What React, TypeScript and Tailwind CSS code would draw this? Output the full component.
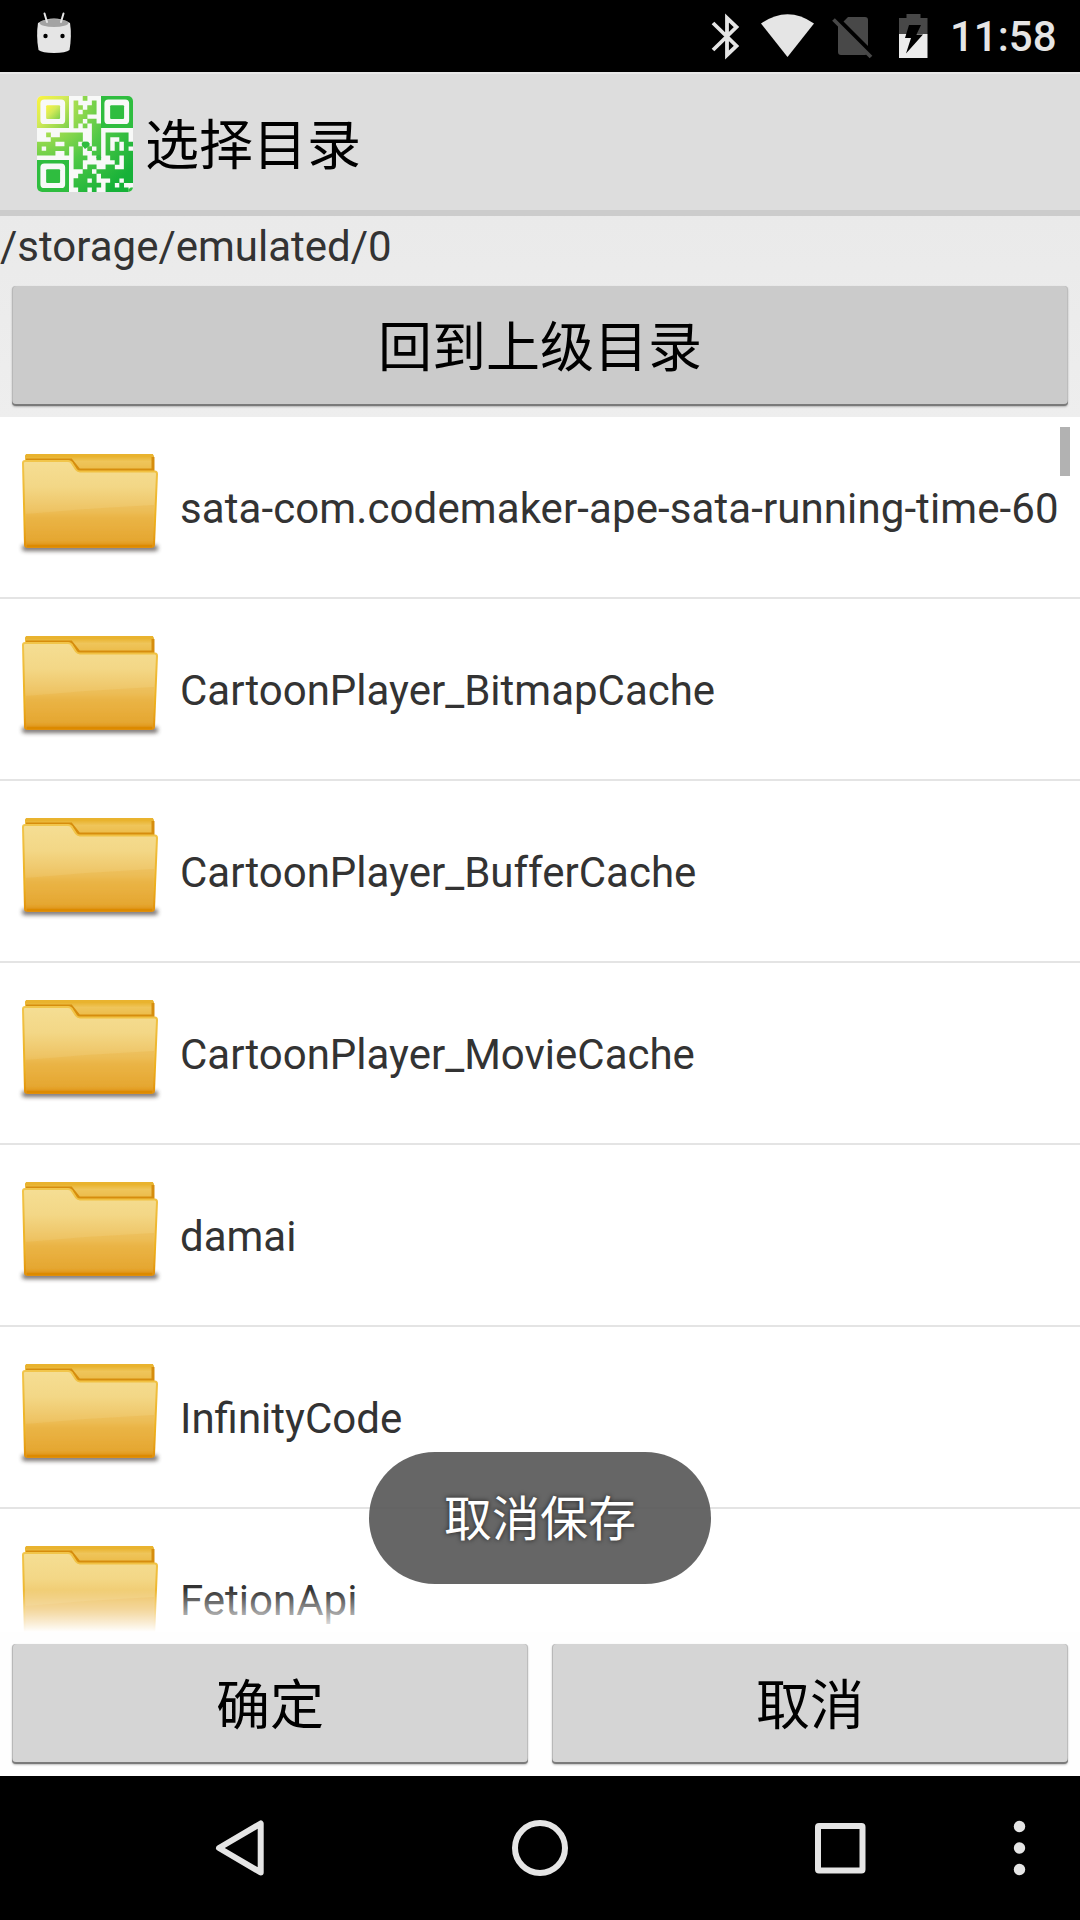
import React from "react";

const FOLDERS = [
  "sata-com.codemaker-ape-sata-running-time-60",
  "CartoonPlayer_BitmapCache",
  "CartoonPlayer_BufferCache",
  "CartoonPlayer_MovieCache",
  "damai",
  "InfinityCode",
  "FetionApi",
];

const QR = [
  "..........#..........",
  "........#...#........",
  "........##.##........",
  "........#.###........",
  "........###..........",
  "........##.##........",
  "........#.#.##.......",
  "............##.......",
  "..#..#####..##.#####.",
  "...#######..##.#..##.",
  "####..###.#.##.#.#.##",
  "#.#####.##.#.#.#.#.#.",
  "####..#.##..##.######",
  "........###..#..##.##",
  "........##.......#.##",
  "........##.##..##..##",
  "..........##.########",
  ".........####.#######",
  "........###.#...##.##",
  "........######.##.#..",
  ".........##.#..#####.",
];

function Finder({ x, y }: { x: number; y: number }) {
  return (
    <g transform={`translate(${x} ${y})`} fillRule="evenodd">
      <path d="M0 0H7V7H0ZM1.6 .75Q.75 .75 .75 1.6V5.3Q.75 6.15 1.6 6.15H5.3Q6.15 6.15 6.15 5.3V1.6Q6.15 .75 5.3 .75Z" />
      <rect x="2" y="2" width="3.05" height="3.05" rx=".25" />
    </g>
  );
}

function QrLogo() {
  return (
    <svg className="mt-1 h-24 w-24 rounded-[5px] bg-[#f8f9f8]" viewBox="0 0 21 21">
      <defs>
        <radialGradient id="qr" gradientUnits="userSpaceOnUse" cx="0" cy="0" r="26">
          <stop offset="0" stopColor="#fff84a" />
          <stop offset=".16" stopColor="#dcee58" />
          <stop offset=".38" stopColor="#93d94e" />
          <stop offset=".62" stopColor="#4fc846" />
          <stop offset="1" stopColor="#16b138" />
        </radialGradient>
        <linearGradient id="corner" x1="0" y1="0" x2="1" y2="1">
          <stop offset="0" stopColor="#fdf43f" />
          <stop offset=".45" stopColor="#d3ea58" />
          <stop offset="1" stopColor="#7bd04c" />
        </linearGradient>
      </defs>
      <path
        fill="url(#qr)"
        d={QR.map((row, y) =>
          [...row].map((c, x) => (c === "#" ? `M${x} ${y}h1.03v1.03h-1.03z` : "")).join("")
        ).join("")}
      />
      <g fill="url(#corner)"><Finder x={0} y={0} /></g>
      <g fill="#2fbd3f">
        <Finder x={14} y={0} />
        <Finder x={0} y={14} />
        <circle cx="13.5" cy="13.4" r=".5" />
        <path d="M10.5 11.6 9.8 10.8V10.2L10.2 10H11.2L11.5 10.4V10.9Z" />
        <path d="M20 21V20.4L20.5 20H21V21Z" />
      </g>
    </svg>
  );
}

function Folder() {
  return (
    <svg className="h-[180px] w-[180px] shrink-0" viewBox="0 0 180 180">
      <defs>
        <linearGradient id="front" x1="0" y1="0" x2="0" y2="1">
          <stop offset="0" stopColor="#f5de94" />
          <stop offset=".3" stopColor="#f3d786" />
          <stop offset=".58" stopColor="#eec363" />
          <stop offset=".66" stopColor="#ebb84d" />
          <stop offset=".92" stopColor="#e5a733" />
          <stop offset="1" stopColor="#de8e0c" />
        </linearGradient>
        <linearGradient id="edge" x1="0" y1="0" x2="0" y2="1">
          <stop offset="0" stopColor="#f1c54b" />
          <stop offset=".7" stopColor="#eeb01e" />
          <stop offset="1" stopColor="#e19009" />
        </linearGradient>
        <linearGradient id="back" x1="0" y1="0" x2="0" y2="1">
          <stop offset="0" stopColor="#e6aa18" />
          <stop offset=".3" stopColor="#efc55a" />
          <stop offset="1" stopColor="#e8b038" />
        </linearGradient>
        <filter id="soft" x="-10%" y="-200%" width="120%" height="500%">
          <feGaussianBlur stdDeviation="2.2" />
        </filter>
        <filter id="tiny" x="-5%" y="-5%" width="110%" height="110%">
          <feGaussianBlur stdDeviation=".7" />
        </filter>
      </defs>
      <rect x="22" y="128" width="136" height="6" rx="3" fill="#3d3530" opacity=".7" filter="url(#soft)" />
      <g filter="url(#tiny)">
        <path d="M25 50V39Q25 37 28 37H151Q154 37 154 40V62H25Z" fill="url(#back)" />
        <path d="M26 38H153" fill="none" stroke="#e9b32e" strokeWidth="2" />
        <path d="M26 43H71L79 53H153V40" fill="none" stroke="#d68d0e" strokeWidth="3" />
        <path
          d="M23 46Q23 44 25 44H68Q71 44 72.500 47L76 52.500Q77.500 54.500 80 54.500H155Q157 54.500 157 57L154 128Q154 130 151 130H28Q25 130 25 128Z"
          fill="url(#front)" stroke="url(#edge)" strokeWidth="2"
        />
        <path d="M26 97Q90 91 154 88L153 126H27Z" fill="#e8a92e" opacity=".22" />
        <path d="M27 129H152" stroke="#dc8a04" strokeWidth="2.400" />
      </g>
    </svg>
  );
}

function HoloButton({ label, tone }: { label: string; tone: string }) {
  return (
    <button
      className={`h-[120px] flex-1 rounded-[4px] pt-[6px] text-[54px] leading-none text-black shadow-[0_1px_2px_rgba(0,0,0,0.25),inset_0_-2px_0_#7a7a7a,inset_1px_0_0_#b8b8b8,inset_-1px_0_0_#bdbdbd] ${tone}`}
    >
      {label}
    </button>
  );
}

function StatusBar() {
  return (
    <div className="flex h-[72px] shrink-0 items-center justify-between bg-black text-[#e5e5e5]">
      <svg className="ml-9 h-[72px] w-9" viewBox="36 0 36 72">
        <path d="M38 23Q54 14 70 23Q72 36 69.500 50Q66 53 54 53Q42 53 38.500 50Q36 36 38 23Z" fill="#e5e5e5" />
        <ellipse cx="54" cy="23" rx="14.500" ry="4" fill="#a3a3a3" />
        <path d="M44.500 13.500 47 22M63.500 13.500 61 22" stroke="#e5e5e5" strokeWidth="2" strokeLinecap="round" />
        <circle cx="45.500" cy="36" r="2.200" />
        <circle cx="62.500" cy="36" r="2.200" />
      </svg>
      <div className="flex items-center">
        <svg className="h-[72px] w-[240px]" viewBox="700 0 240 72">
          <path d="M713 23 736.500 46 727 55V18L736.500 27 713 50" fill="none" stroke="#e5e5e5" strokeWidth="3.800" />
          <path d="M761 23.500Q787.500 5 814 23.500L787.500 57Z" fill="#e5e5e5" />
          <path d="M848 17H865Q868 17 868 20V46L843.500 21.500ZM838 25 867 54Q866 55 865 55H841Q838 55 838 52Z" fill="#484848" />
          <path d="M833.500 19.500 871 57" stroke="#484848" strokeWidth="3.800" />
          <path d="M906.500 14H920.500V18H927.500V34H899V18H906.500Z" fill="#484848" />
          <path d="M899 34H927.500V58H899Z" fill="#ececec" />
          <path d="M909 25H921L916.500 34.500H923L906 53.500 911 38H905Z" fill="#000" />
        </svg>
        <span className="ml-[10px] w-[130px] pt-[2px] text-[42px] font-medium leading-[70px]">11:58</span>
      </div>
    </div>
  );
}

function NavBar() {
  return (
    <div className="h-36 shrink-0 bg-black">
      <svg className="h-36 w-full" viewBox="0 1776 1080 144" fill="none" stroke="#e5e5e5" strokeWidth="6" strokeLinejoin="round">
        <path d="M219 1848 260.700 1823.500V1872.500Z" />
        <circle cx="540" cy="1848" r="25" />
        <rect x="818" y="1826" width="44.500" height="44.500" rx="1" />
        <g fill="#e5e5e5" stroke="none">
          <circle cx="1019.500" cy="1826.500" r="5.700" />
          <circle cx="1019.500" cy="1848" r="5.700" />
          <circle cx="1019.500" cy="1869.500" r="5.700" />
        </g>
      </svg>
    </div>
  );
}

export default function App() {
  return (
    <div className="relative flex h-[1920px] w-[1080px] flex-col overflow-hidden bg-white font-[Roboto,'Noto_Sans_CJK_SC',sans-serif]">
      <StatusBar />
      <header className="flex h-36 shrink-0 items-center border-b-[6px] border-t-2 border-b-[#cccccc] border-t-[#e8e8e8] bg-[#dddddd] pl-[37px]">
        <QrLogo />
        <h1 className="ml-3 pt-[9px] text-[54px] leading-none text-black">选择目录</h1>
      </header>
      <section className="flex h-[201px] shrink-0 flex-col bg-linear-to-b from-[#eaeaea] to-[#eeeeee]">
        <p className="h-[70px] text-[42px] leading-[62px] text-[#333333]">/storage/emulated/0</p>
        <div className="flex px-3">
          <HoloButton label="回到上级目录" tone="bg-[#cbcbcb]" />
        </div>
      </section>
      <main className="relative h-[1215px] shrink-0 overflow-hidden">
        {FOLDERS.map((name, i) => (
          <div key={name} className="flex h-[182px] items-start border-b-2 border-[#e4e4e4]">
            <Folder />
            <span
              className={`whitespace-nowrap text-[42px] leading-[184px] text-[#333333] ${i === 0 ? "tracking-[0.1px]" : ""}`}
            >
              {name}
            </span>
          </div>
        ))}
        <div className="absolute right-[10px] top-[10px] h-[49px] w-[10px] bg-[#b2b2b2]" />
        <div className="absolute bottom-0 left-0 h-[42px] w-full bg-linear-to-b from-white/0 to-white" />
      </main>
      <footer className="flex h-36 shrink-0 gap-6 bg-[#fefefe] px-3 pt-3">
        <HoloButton label="确定" tone="bg-[#d5d5d5]" />
        <HoloButton label="取消" tone="bg-[#d5d5d5]" />
      </footer>
      <NavBar />
      <div className="absolute left-[369px] top-[1452px] flex h-[132px] w-[342px] items-center justify-center rounded-full bg-[#555555]/90 pt-[3px] text-5xl text-white [text-shadow:0_0_5px_rgba(0,0,0,0.7)]">
        取消保存
      </div>
    </div>
  );
}
